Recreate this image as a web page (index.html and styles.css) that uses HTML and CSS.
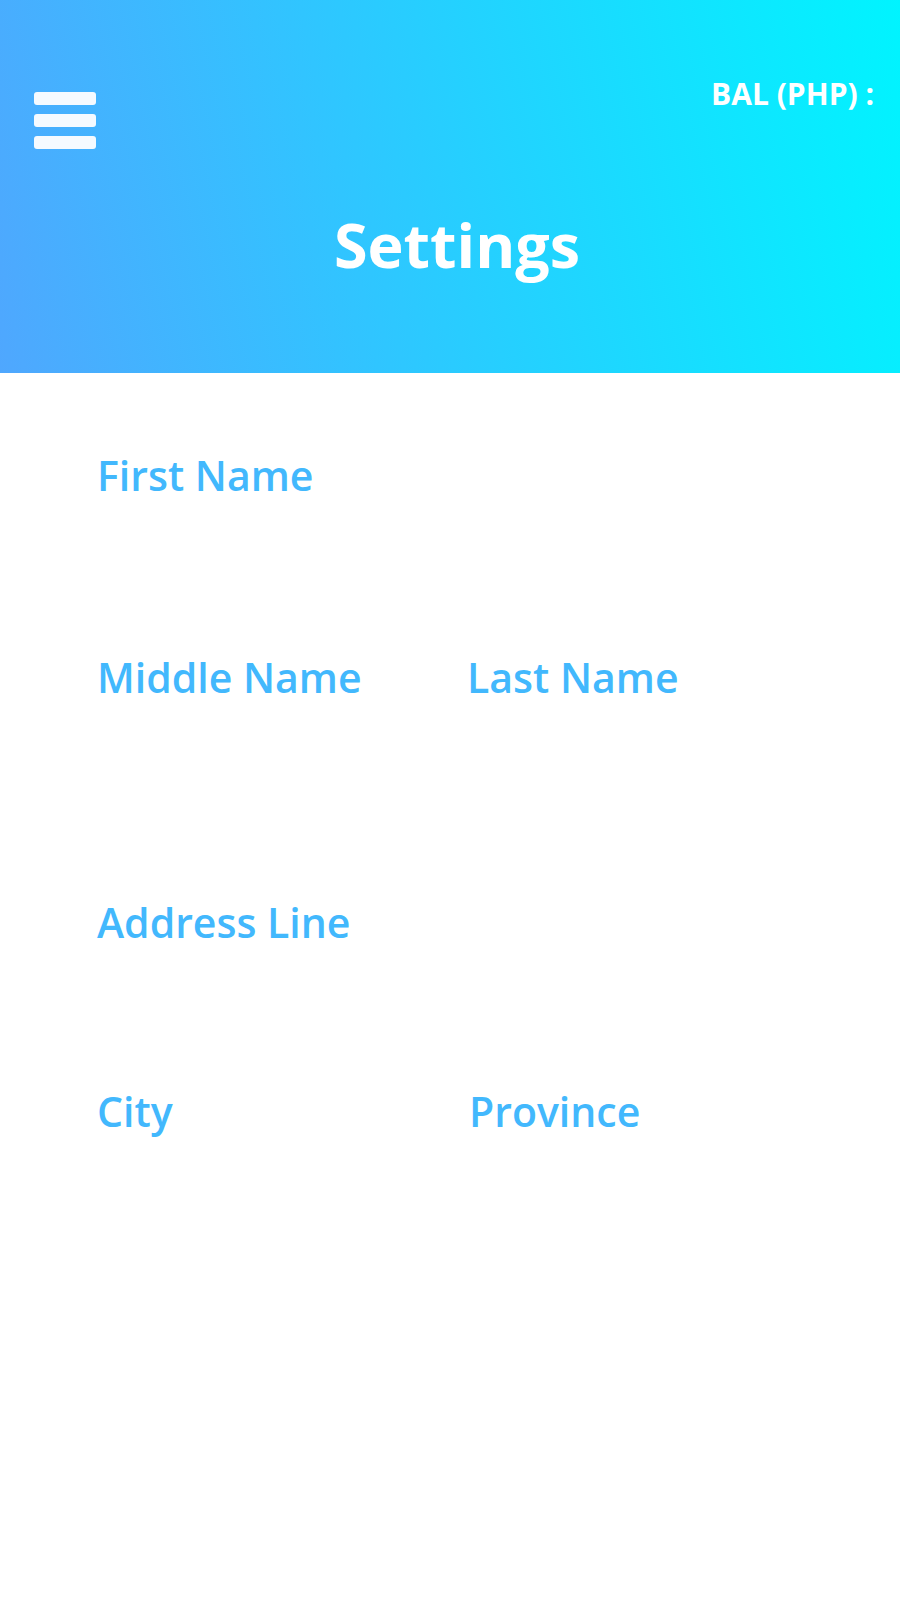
FILE: index.html
```html
<!DOCTYPE html>
<html lang="en">
<head>
<meta charset="utf-8">
<title>Settings</title>
<link rel="stylesheet" href="styles.css">
</head>
<body>
<header class="header">
  <div class="topbar">
    <button class="menu" aria-label="Menu">
      <span class="bar"></span>
      <span class="bar"></span>
      <span class="bar"></span>
    </button>
    <div class="balance">BAL (PHP) :</div>
  </div>
  <h1 class="title">Settings</h1>
</header>
<main class="form">
  <div class="row row-first">
    <div class="field"><label class="label">First Name</label></div>
  </div>
  <div class="row row-names">
    <div class="field"><label class="label">Middle Name</label></div>
    <div class="field"><label class="label">Last Name</label></div>
  </div>
  <div class="row row-address">
    <div class="field"><label class="label">Address Line</label></div>
  </div>
  <div class="row row-city">
    <div class="field"><label class="label">City</label></div>
    <div class="field field-shift"><label class="label">Province</label></div>
  </div>
</main>
</body>
</html>
```
FILE: styles.css
```css
* { box-sizing: border-box; }
html, body { margin: 0; padding: 0; }
body {
  width: 900px;
  min-height: 1600px;
  background: #ffffff;
  font-family: "Open Sans", "Noto Sans", "Liberation Sans", sans-serif;
}
.header {
  height: 373px;
  padding: 76px 26px 0 34px;
  background: linear-gradient(78deg, #4fa7fe 0%, #2fc6ff 40%, #00f4ff 100%);
  color: #ffffff;
}
.topbar {
  display: flex;
  justify-content: space-between;
  align-items: flex-start;
}
.menu {
  margin: 16px 0 0 0;
  padding: 0;
  border: 0;
  background: none;
  display: flex;
  flex-direction: column;
  gap: 9px;
  cursor: pointer;
}
.bar {
  display: block;
  width: 62px;
  height: 13px;
  border-radius: 3px;
  background: #f5faff;
}
.balance {
  font-size: 30px;
  font-weight: 700;
  line-height: 36px;
}
.title {
  margin: 61px 0 0 0;
  padding-left: 6px;
  text-align: center;
  font-size: 61px;
  font-weight: 700;
  line-height: 70px;
}
.form {
  padding: 0 40px 0 97px;
}
.row {
  display: grid;
  grid-template-columns: 370px 1fr;
}
.row-first { margin-top: 77px; height: 202px; }
.row-names { height: 245px; }
.row-address { height: 189px; }
.row-city { height: 200px; }
.field-shift { padding-left: 2px; }
.label {
  display: block;
  color: #42b8fd;
  font-size: 41px;
  font-weight: 600;
  line-height: 50px;
}
```
